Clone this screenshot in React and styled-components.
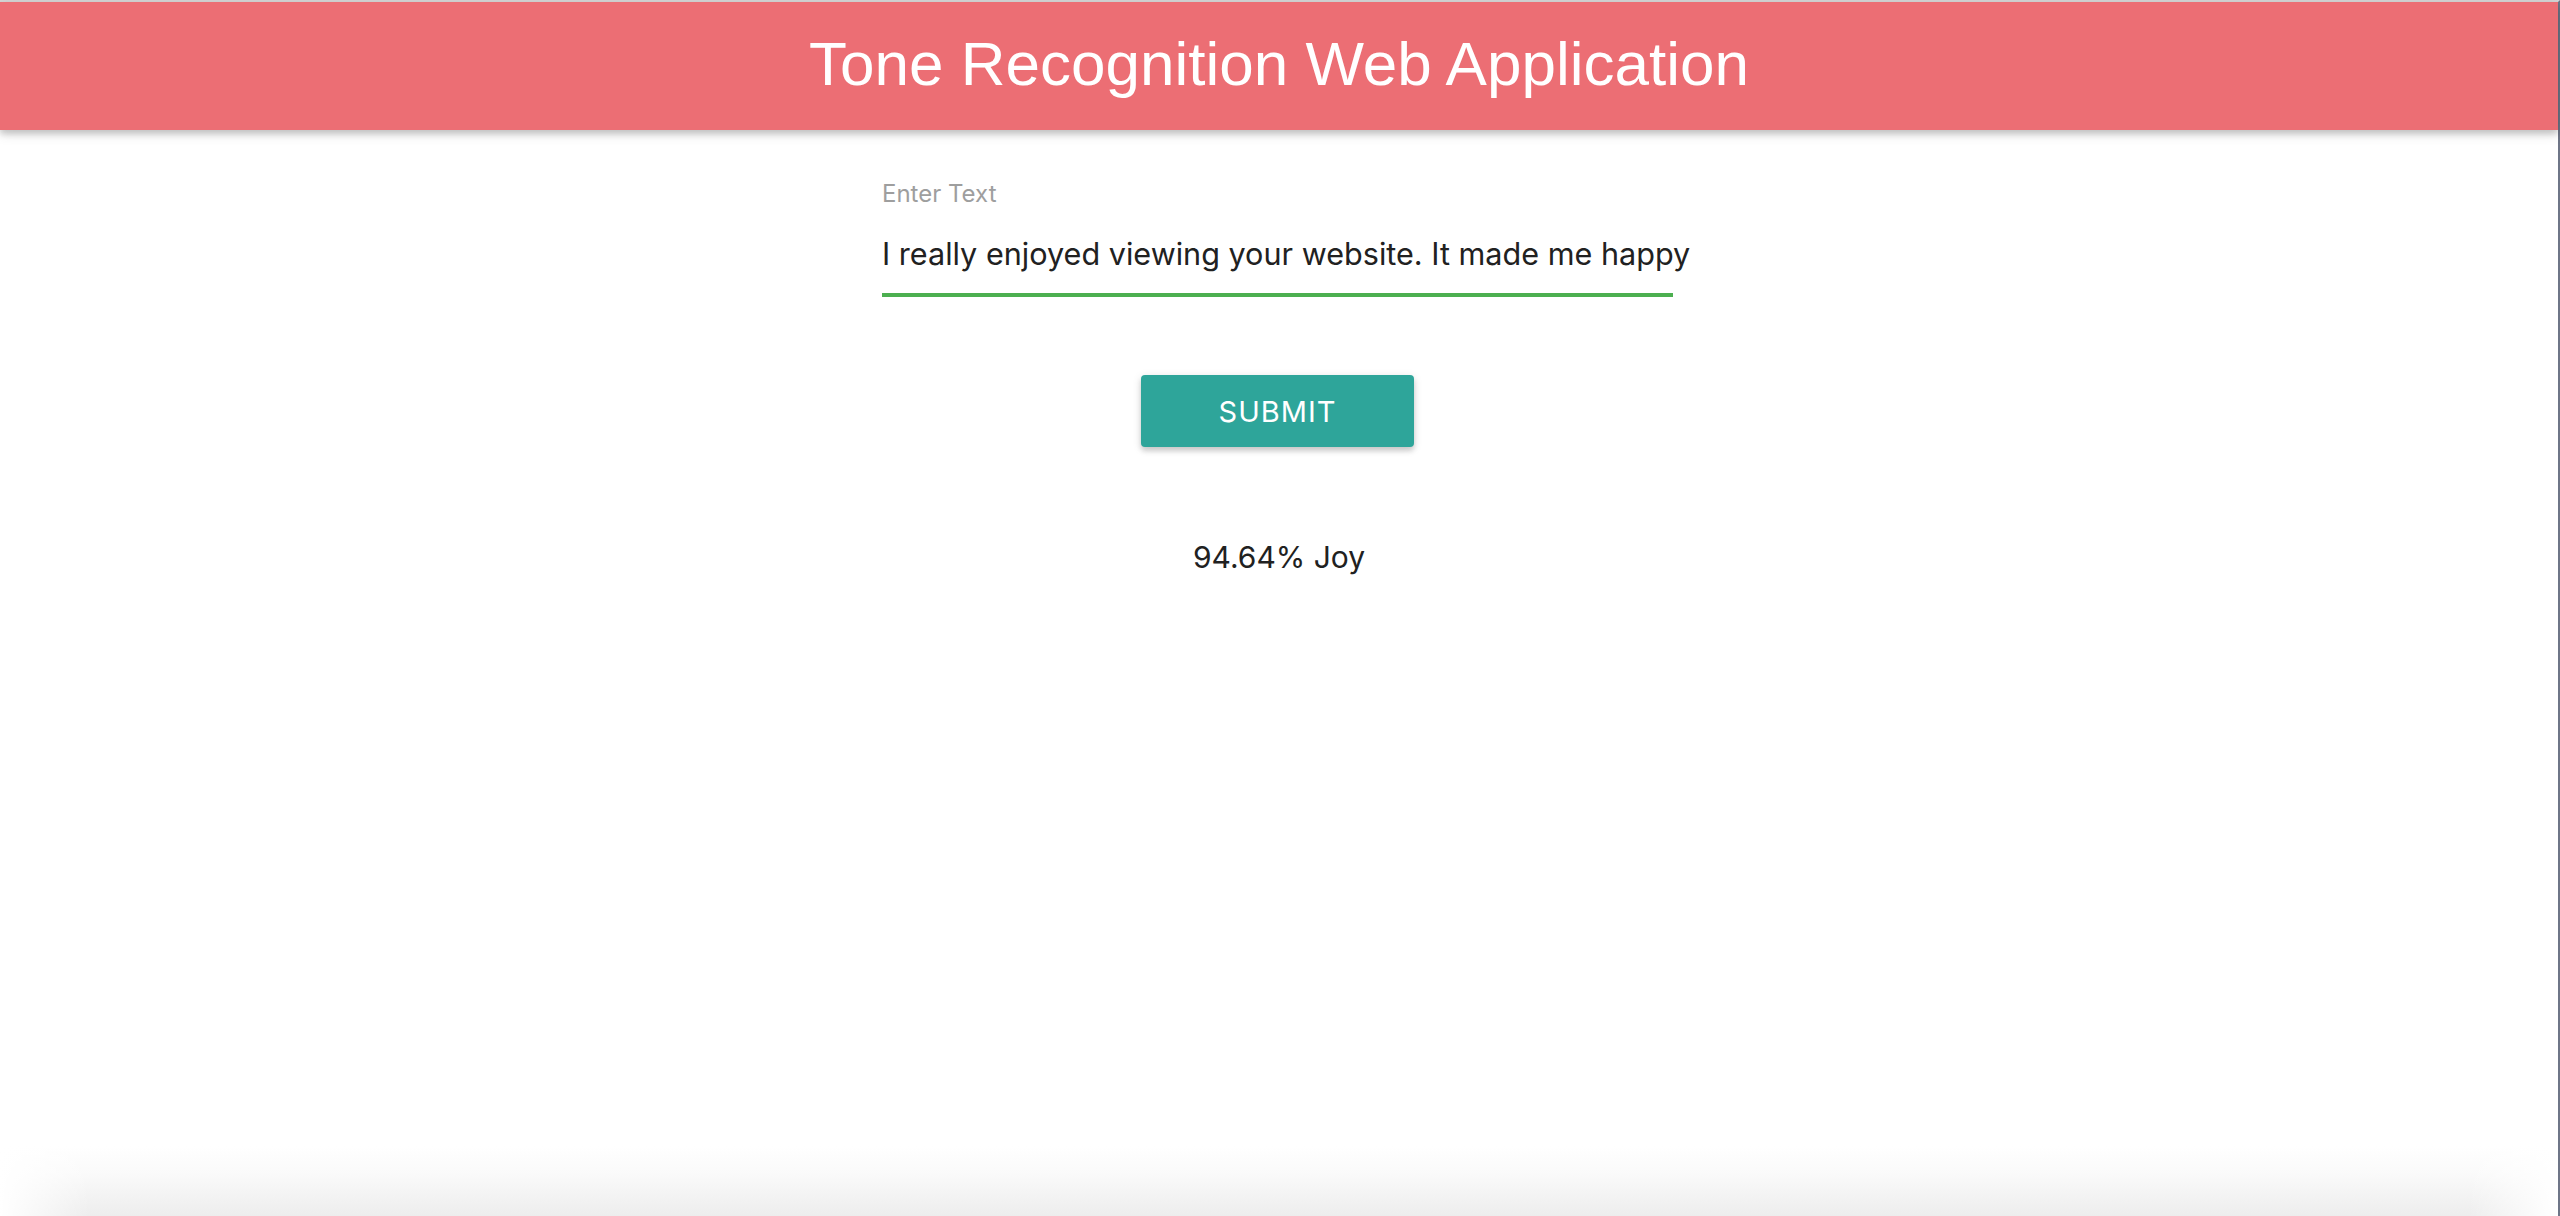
import React, { useState } from 'react'
import styled, { createGlobalStyle } from 'styled-components'

const GlobalStyle = createGlobalStyle`
  html, body {
    margin: 0;
    padding: 0;
    background: #ffffff;
  }
  * {
    box-sizing: border-box;
  }
`

const Frame = styled.div`
  min-height: 100vh;
  display: flex;
  flex-direction: column;
  border-top: 2px solid #d6d6d6;
  border-right: 2px solid #6e7587;
  font-family: Inter, "Noto Sans", sans-serif;
`

const Nav = styled.header`
  height: 128px;
  background: #ec6e74;
  display: flex;
  align-items: center;
  justify-content: center;
  box-shadow: 0 4px 6px rgba(0, 0, 0, 0.16), 0 4px 12px rgba(0, 0, 0, 0.12);
  position: relative;
  z-index: 1;
`

const Title = styled.h1`
  margin: 0 0 4px;
  color: #ffffff;
  font-family: "Liberation Sans", Arial, sans-serif;
  font-weight: 400;
  font-size: 62px;
  line-height: 1;
`

const Form = styled.form`
  width: 791px;
  margin: 49px 0 0 calc(50% - 397px);
  display: flex;
  flex-direction: column;
`

const Label = styled.label`
  color: #9e9e9e;
  font-size: 24px;
  line-height: 30px;
`

// the typed text runs a little past the green line, as in a scrolled field
const Field = styled.div`
  margin-top: 24px;
  border-bottom: 4px solid #4caf50;
  overflow: visible;
`

const Input = styled.input`
  display: block;
  width: calc(100% + 40px);
  border: none;
  outline: none;
  padding: 0 0 20px;
  height: 60px;
  font-family: Inter, "Noto Sans", sans-serif;
  font-size: 30.6px;
  line-height: 40px;
  color: #212121;
  background: transparent;
`

const Button = styled.button`
  align-self: center;
  margin-top: 78px;
  width: 273px;
  height: 72px;
  border: none;
  border-radius: 4px;
  background: #2ea59a;
  color: #ffffff;
  font-family: Inter, "Noto Sans", sans-serif;
  font-size: 29px;
  letter-spacing: 1px;
  text-transform: uppercase;
  box-shadow: 0 4px 5px 0 rgba(0, 0, 0, 0.14), 0 2px 10px 0 rgba(0, 0, 0, 0.12);
  cursor: pointer;
`

const Result = styled.p`
  margin: 90px 0 0;
  text-align: center;
  font-size: 30px;
  line-height: 40px;
  color: #212121;
`

const WindowEdge = styled.div`
  margin-top: auto;
  height: 70px;
  background:
    linear-gradient(to right, #ffffff, rgba(255, 255, 255, 0) 90px, rgba(255, 255, 255, 0) calc(100% - 90px), #ffffff),
    linear-gradient(to bottom, #ffffff, #fafafa 40%, #ededed);
`

export default function App() {
  const [text, setText] = useState('I really enjoyed viewing your website. It made me happy')

  return (
    <Frame>
      <GlobalStyle />
      <Nav>
        <Title>Tone Recognition Web Application</Title>
      </Nav>
      <Form onSubmit={(e) => e.preventDefault()}>
        <Label htmlFor="tone-text">Enter Text</Label>
        <Field>
          <Input id="tone-text" value={text} onChange={(e) => setText(e.target.value)} />
        </Field>
        <Button type="submit">Submit</Button>
      </Form>
      <Result>94.64% Joy</Result>
      <WindowEdge />
    </Frame>
  )
}
